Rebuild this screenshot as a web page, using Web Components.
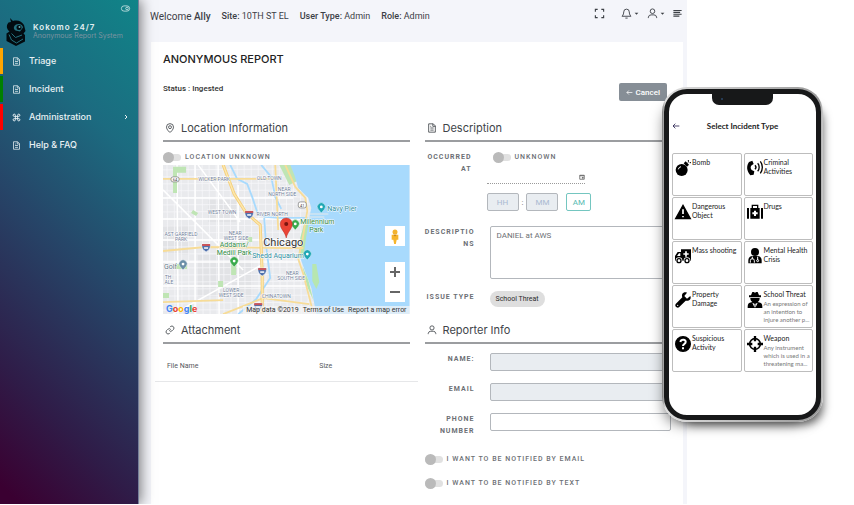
<!DOCTYPE html>
<html lang="en">
<head>
<meta charset="utf-8">
<meta name="viewport" content="width=device-width, initial-scale=1">
<title>Kokomo 24/7 - Anonymous Report</title>
<style>
  body {
    margin: 0;
    background: #fff;
    font-family: Roboto, "Liberation Sans", sans-serif;
    --heading-font: Inter, "Liberation Sans", sans-serif;
    --phone-font: Lato, "Liberation Sans", sans-serif;
  }
</style>
</head>
<body>
<report-page></report-page>

<script>
const ICONS = {
  file: `<path d="M4 2h11l5 5v15H4zM14 2v6h6M8 12h8M8 17h8M8 8h2"/>`,
  command: `<path d="M18 3a3 3 0 0 0-3 3v12a3 3 0 1 0 3-3H6a3 3 0 1 0 3 3V6a3 3 0 1 0-3 3h12a3 3 0 0 0 0-6z" stroke-width="2.500"/>`,
  chevron: `<path d="M8 4l8 8-8 8" stroke-width="4"/>`,
  toggle: `<rect x="1" y="5" width="22" height="14" rx="7"/><circle cx="16" cy="12" r="3.500"/>`,
  pin: `<path d="M20.500 10c0 6-8.500 13-8.500 13S3.500 16 3.500 10a8.500 8.500 0 0 1 17 0z"/><circle cx="12" cy="10" r="3.500"/>`,
  link: `<path d="M10 13a5 5 0 0 0 7.500.500l3-3a5 5 0 0 0-7-7L11.800 5.200M14 11a5 5 0 0 0-7.500-.500l-3 3a5 5 0 0 0 7 7l1.700-1.700"/>`,
  user: `<circle cx="12" cy="7" r="5"/><path d="M3 22v-2a6 6 0 0 1 6-5h6a6 6 0 0 1 6 5v2"/>`,
  bell: `<path d="M18 8.500a6 6 0 0 0-12 0c0 7-4 9.500-4 9.500h20s-4-2.500-4-9.500M9.500 22h5"/>`,
  expand: `<path d="M8 3H3v5M16 3h5v5M8 21H3v-5M16 21h5v-5" stroke-width="2.500"/>`,
  menu: `<path d="M1 4h22M1 9h18M1 14h22M1 19h16" stroke-width="3"/>`,
  caret: `<path d="M3 8h18l-9 10z" fill="currentColor" stroke="none"/>`,
  back: `<path d="M22 12H3M10 5l-7 7 7 7" stroke-width="2.500"/>`,
  calendar: `<path d="M3 5h18v16H3zM3 7h18" stroke-width="3"/><path d="M13 13h4v4h-4z" fill="currentColor"/>`,
  bomb: `<g fill="currentColor" stroke="none"><circle cx="10" cy="15" r="9"/><path d="M13 5l3-3 5 5-3 3z"/></g><path d="M19 4l2-2M20 0v2M22 4h2" stroke-width="1.500"/><path d="M5 14a5 5 0 0 1 4-4" stroke="#fff" stroke-width="1.500"/>`,
  call: `<path d="M8 1L3 3C-1 9-1 16 5 23l5-1 1-5-4-2c-2-2-2-5 0-7l3-2z" fill="currentColor" stroke="none"/><path d="M12 8c2 2 2 4 0 6M16 5c3 3 3 9 0 12M20 2c4 5 4 13 0 18" stroke-width="2"/>`,
  warning: `<path d="M12 2l11 20H1z" fill="currentColor"/><path d="M12 8v7M12 18v2" stroke="#fff" stroke-width="2.500"/>`,
  medkit: `<g fill="currentColor" stroke="none"><path d="M0 6h3v16H0zM21 6h3v16h-3zM5 6h14v16H5z"/></g><path d="M8 6V2h8v4"/><path d="M12 10v8M8 14h8" stroke="#fff" stroke-width="3"/>`,
  ambulance: `<path d="M9 2h15v17H0v-7l4-6h5z" fill="currentColor" stroke="none"/><path d="M16.500 5v8M12.500 9h8" stroke="#fff" stroke-width="2.500"/><path d="M3 12l3-4h2v4z" fill="#fff" stroke="none"/><circle cx="6" cy="19" r="5" fill="#fff" stroke="none"/><circle cx="18" cy="19" r="5" fill="#fff" stroke="none"/><circle cx="6" cy="19" r="3"/><circle cx="18" cy="19" r="3"/>`,
  doctor: `<g fill="currentColor" stroke="none"><circle cx="12" cy="6" r="6"/><path d="M2 23v-4c0-5 3-7 7-7h6c4 0 7 2 7 7v4z"/></g><path d="M8 13v4M5 22v-3a3 3 0 0 1 6 0v3M16 13v5" stroke="#fff" stroke-width="1.500"/><circle cx="16" cy="19" r="1.500" stroke="#fff" stroke-width="1.500"/>`,
  wrench: `<path d="M23 6l-5 4-4-4 4-5C13-1 9 3 11 8L1 18c-2 3 2 7 5 5l10-10c5 1 9-2 7-7z" fill="currentColor" stroke="none"/><circle cx="4" cy="20" r="1" fill="#fff" stroke="none"/>`,
  spy: `<g fill="currentColor" stroke="none"><path d="M8 0h2l2 1 2-1h2l2 5h3v3H3V5h3zM5 9h14c0 3-1 5-3 6l4 1c3 1 3 4 3 8H1c0-4 0-7 3-8l4-1c-2-1-3-3-3-6z"/></g><path d="M8 16l4 2 4-2-3 7h-2z" fill="#fff" stroke="none"/><path d="M12 17v6" stroke-width="1"/>`,
  question: `<circle cx="12" cy="12" r="11" fill="currentColor"/><path d="M8 9c1-5 9-4 8 0 0 3-4 3-4 6M12 17v3" stroke="#fff" stroke-width="3"/>`,
  target: `<circle cx="12" cy="12" r="8" stroke-width="2.500"/><path d="M12 0v8M12 16v8M0 12h8M16 12h8" stroke-width="3.500"/>`
};

const icon = (name, size = 10) =>
  `<svg class="icon" viewBox="0 0 24 24" width="${size}" height="${size}" fill="none" stroke="currentColor" stroke-width="2" aria-hidden="true">${ICONS[name]}</svg>`;

const BASE = `
  * { box-sizing: border-box; }
  svg { display: block; flex: none; overflow: visible; }
  button { border: 0; padding: 0; margin: 0; background: none; color: inherit; font: inherit; cursor: pointer; }
  a { color: inherit; text-decoration: none; }
  input, textarea { margin: 0; font: inherit; color: inherit; outline: none; }
`;

class BaseElement extends HTMLElement {
  constructor() {
    super();
    this.root = this.attachShadow({ mode: "open" });
  }

  connectedCallback() {
    this.root.innerHTML = `<style>${BASE}${this.styles()}</style>${this.render()}`;
  }
}

class NavItem extends BaseElement {
  styles() {
    return `
      :host { display: block; }
      a {
        display: flex;
        align-items: center;
        gap: 8px;
        height: 26px;
        padding: 0 9px;
        border-left: 3px solid var(--mark, transparent);
        color: #e9f1f4;
        font: 500 9px/12px var(--heading-font);
      }
      span { flex: 1; }
    `;
  }

  render() {
    const arrow = this.hasAttribute("expandable") ? icon("chevron", 6) : "";
    return `<a href="#">${icon(this.getAttribute("icon"), 9)}<span><slot></slot></span>${arrow}</a>`;
  }
}

class SideNav extends BaseElement {
  styles() {
    return `
      :host {
        display: block;
        position: relative;
        z-index: 1;
        background: linear-gradient(225deg, #108488 0%, #1c6b80 25%, #264568 50%, #2f1c48 78%, #3a0031 97%);
        border-right: 1px solid #76809a;
        box-shadow: 2px 0 12px rgba(0, 0, 0, .5);
      }
      .pin { display: flex; justify-content: flex-end; padding: 4px 8px 0; color: #d5e9ea; }
      .brand { display: flex; align-items: center; gap: 7px; height: 35px; padding: 2px 6px 0; }
      h1 { margin: 0; color: #e4f0f2; font: 600 8px/9px var(--heading-font); letter-spacing: 1px; }
      p { margin: 0; color: #7c93a0; font: 7px/8px var(--heading-font); }
      nav { display: grid; gap: 2px; }
    `;
  }

  render() {
    return `
      <div class="pin"><button aria-label="Pin menu">${icon("toggle", 9)}</button></div>
      <div class="brand">
        <svg viewBox="0 0 40 56" width="20" height="28" aria-hidden="true">
          <path fill="#020b10" d="M8 0l6 6c10-3 18 1 22 8l3 12-4 5 3 3v13L20 56 1 46V31l6-4C1 22 0 15 5 9l5-1z"/>
          <path fill="#24717f" d="M20 13c7-3 13 0 14 6l-6 8-9-2c-5-3-4-9 1-12z"/>
          <circle cx="26" cy="19" r="5" fill="#020b10"/><circle cx="27" cy="18" r="2" fill="#6caab0"/>
          <path fill="none" stroke="#24717f" stroke-width="2" d="M6 33l5 11 10 6 13-8M11 31l8 8 13-5"/>
        </svg>
        <div><h1>Kokomo 24/7</h1><p>Anonymous Report System</p></div>
      </div>
      <nav>
        <nav-item icon="file" style="--mark: orange">Triage</nav-item>
        <nav-item icon="file" style="--mark: green">Incident</nav-item>
        <nav-item icon="command" style="--mark: red" expandable>Administration</nav-item>
        <nav-item icon="file">Help &amp; FAQ</nav-item>
      </nav>
    `;
  }
}

class TopBar extends BaseElement {
  styles() {
    return `
      :host {
        display: flex;
        justify-content: space-between;
        height: 42px;
        padding: 0 5px 0 11px;
        color: #3c4046;
      }
      .info { display: flex; gap: 11px; padding-top: 10px; font-size: 9px; line-height: 13px; white-space: nowrap; }
      .welcome { font-size: 10px; }
      b { font-weight: 500; }
      .actions { display: flex; align-items: center; gap: 8px; height: 26px; }
      button { display: flex; align-items: center; gap: 2px; }
      .actions button:first-child { margin-right: 8px; }
    `;
  }

  render() {
    return `
      <div class="info">
        <span class="welcome">Welcome <b>Ally</b></span>
        <span><b>Site:</b> 10TH ST EL</span>
        <span><b>User Type:</b> Admin</span>
        <span><b>Role:</b> Admin</span>
      </div>
      <div class="actions">
        <button aria-label="Full screen">${icon("expand", 11)}</button>
        <button aria-label="Notifications">${icon("bell", 11)}${icon("caret", 5)}</button>
        <button aria-label="Account">${icon("user", 11)}${icon("caret", 5)}</button>
        <button aria-label="Menu">${icon("menu", 9)}</button>
      </div>
    `;
  }
}

class SectionHeading extends BaseElement {
  styles() {
    return `
      :host { display: block; border-bottom: 2px solid #9b9da0; color: #404449; }
      h3 {
        display: flex;
        align-items: center;
        gap: 6px;
        margin: 0;
        height: 22px;
        padding: 0 2px 2px;
        font: 400 11px/14px var(--heading-font);
      }
    `;
  }

  render() {
    return `<h3>${icon(this.getAttribute("icon"), 10)}<slot></slot></h3>`;
  }
}

class ToggleSwitch extends BaseElement {
  styles() {
    return `
      :host { display: block; }
      label {
        display: flex;
        align-items: center;
        gap: 4px;
        color: #6c6f75;
        font-size: 7px;
        font-weight: 500;
        line-height: 12px;
        letter-spacing: 1px;
        white-space: nowrap;
      }
      input {
        appearance: none;
        display: flex;
        align-items: center;
        width: 18px;
        height: 7px;
        border-radius: 4px;
        background: #e1e1e1;
      }
      input::before { content: ""; width: 11px; height: 11px; border-radius: 50%; background: #bababa; flex: none; }
      input:checked { justify-content: flex-end; }
    `;
  }

  render() {
    return `<label><input type="checkbox"><span><slot></slot></span></label>`;
  }
}

const LABEL = `
  .row { display: grid; grid-template-columns: 50px minmax(0, 1fr); gap: 15px; align-items: start; }
  .label {
    color: #6c6f75;
    font-size: 7px;
    font-weight: 700;
    line-height: 12px;
    letter-spacing: 1px;
    text-align: right;
    overflow-wrap: anywhere;
  }
`;

class TextField extends BaseElement {
  styles() {
    return `
      :host { display: block; }
      ${LABEL}
      input, textarea {
        display: block;
        width: 100%;
        height: 18px;
        padding: 4px 6px;
        border: 1px solid #b3b7bc;
        border-radius: 2px;
        background: #fff;
        color: #6d7075;
        font-size: 8px;
        line-height: 10px;
      }
      textarea { height: 53px; resize: none; }
      input:disabled { background: #e9edf1; }
    `;
  }

  render() {
    const value = this.getAttribute("value") || "";
    const disabled = this.hasAttribute("disabled") ? "disabled" : "";
    const control = this.hasAttribute("multiline")
      ? `<textarea id="field">${value}</textarea>`
      : `<input id="field" type="text" value="${value}" ${disabled}>`;
    return `<div class="row"><label class="label" for="field">${this.getAttribute("label")}</label>${control}</div>`;
  }
}

class OccurredField extends BaseElement {
  styles() {
    return `
      :host { display: block; }
      ${LABEL}
      .row { grid-template-columns: 47px minmax(0, 1fr); }
      toggle-switch { padding-left: 6px; }
      .date {
        display: flex;
        align-items: center;
        width: 98px;
        height: 13px;
        margin-top: 8px;
        border-bottom: 1px dotted #9a9a9a;
        color: #555;
      }
      .date input { flex: 1; min-width: 0; border: 0; padding: 0; height: 10px; background: none; }
      .time { display: flex; align-items: center; gap: 3px; margin-top: 9px; color: #666; font-size: 8px; }
      .time input, .time button { height: 18px; border: 1px solid #b3b7bc; border-radius: 2px; text-align: center; padding: 0; }
      .time input { width: 32px; background: #e9edf1; }
      .time input::placeholder { color: #a9bad2; opacity: 1; }
      .time button { width: 25px; margin-left: 5px; border-color: #74c6c0; color: #57bab2; }
    `;
  }

  render() {
    return `
      <div class="row">
        <label class="label" for="date">OCCURRED AT</label>
        <div>
          <toggle-switch>UNKNOWN</toggle-switch>
          <div class="date"><input id="date" type="text"><button aria-label="Pick a date">${icon("calendar", 6)}</button></div>
          <div class="time">
            <input type="text" placeholder="HH" aria-label="Hours" disabled><span>:</span>
            <input type="text" placeholder="MM" aria-label="Minutes" disabled>
            <button>AM</button>
          </div>
        </div>
      </div>
    `;
  }
}

class IssueType extends BaseElement {
  styles() {
    return `
      :host { display: block; }
      ${LABEL}
      .label { white-space: nowrap; }
      .chip {
        justify-self: start;
        padding: 2px 6px;
        border-radius: 8px;
        background: #dedede;
        color: #2c2c2c;
        font-size: 7px;
        line-height: 12px;
      }
    `;
  }

  render() {
    return `<div class="row"><span class="label">ISSUE TYPE</span><span class="chip"><slot></slot></span></div>`;
  }
}

class CityMap extends BaseElement {
  styles() {
    return `
      :host { display: grid; height: 149px; overflow: hidden; font-family: Roboto, sans-serif; }
      .map, .controls { grid-area: 1 / 1; }
      .map { width: 100%; height: 149px; }
      .area { font-size: 5px; fill: #6f7d98; text-anchor: middle; }
      .halo text { paint-order: stroke; stroke: #fff; stroke-width: 1px; stroke-linejoin: round; }
      .controls { z-index: 1; display: flex; flex-direction: column; justify-content: flex-end; align-items: flex-end; }
      .controls button {
        display: grid;
        place-items: center;
        width: 20px;
        height: 20px;
        margin-right: 5px;
        background: #fff;
        color: #666;
      }
      .pegman { margin-bottom: 16px; }
      .legal { display: flex; align-self: stretch; justify-content: space-between; align-items: flex-end; margin-top: 1px; }
      .logo { padding-left: 3px; font: 700 9px/11px var(--heading-font); }
      .links { display: flex; gap: 4px; padding: 0 3px; background: rgba(245, 245, 245, .7); color: #333; font-size: 7px; line-height: 8px; white-space: nowrap; }
    `;
  }

  // Evenly spaced minor streets
  streets() {
    let d = "";
    for (let x = 4; x < 150; x += 7) d += `M${x} 0l1 149`;
    for (let y = 5; y < 149; y += 7) d += `M0 ${y}l155-1`;
    return d;
  }

  shield(x, y) {
    return `<g transform="translate(${x} ${y})"><path d="M-4-3h8c1 4-1 6-4 8-3-2-5-4-4-8z" fill="#4f71ad" stroke="#fff" stroke-width=".6"/><path d="M-4-3h8v2h-8z" fill="#c9545a"/><path d="M-2 1h4" stroke="#fff" stroke-width="1.500"/></g>`;
  }

  poi(x, y, color) {
    return `<path transform="translate(${x} ${y})" d="M0 5L-3 1.500a4 4 0 1 1 6 0z" fill="${color}" stroke="#fff" stroke-width=".4"/><circle cx="${x}" cy="${y - 1}" r="1.400" fill="#fff"/>`;
  }

  render() {
    return `
      <svg class="map" viewBox="0 0 246 149" preserveAspectRatio="xMidYMid slice" role="img" aria-label="Map of Chicago">
        <path fill="#e9eaed" d="M0 0h246v149H0z"/>
        <path fill="#e2e3e6" d="M45 35h28v22H45zM35 90h55v42H35zM0 60h26v30H0z"/>
        <path stroke="#f8f8fa" stroke-width=".7" fill="none" d="${this.streets()}"/>
        <path stroke="#fff" stroke-width="1.500" fill="none" d="M14 0l1 149M32 0v149M55 0l1 149M75 20v129M0 33h130M0 54h140M0 75h138M0 97h135M0 121h145M35 0l42 57M0 25l80 80M10 149l90-50"/>
        <path fill="#bfe5b4" d="M10 2h13v6H14v20H10zM30 45l5 3-2 3-5-3zM10 99h14v5H10zM68 97h5v13h-5zM55 116h5v6h-5zM116 0h12l6 16-8 4zM0 128h6v5H0zM84 72h5v5h-5z"/>
        <path fill="#a8dafd" d="M127 0l4 10 4 13 10 10 3 10-3 14-3 10-2 13-3 13 5 14 6 16 5 26h93V0z"/>
        <path fill="#b7e6b0" d="M142 54h4l-3 17-3 22h-5l2-20zM149 99h4l3 18-3 7-4-8zM139 101l6 14 5 20-6-13z"/>
        <path fill="none" stroke="#a8dafd" stroke-width="1.800" d="M67 0l7 14 10 5 5 13 5 15 8 5 14 1 29 0M101 53l2 29 4 31-14 21-18 15M98 0l10 12 4 20 6 12"/>
        <path stroke="#e5e9eb" stroke-width="1" d="M145 49h20M143 52h18"/>
        <g fill="none" stroke-linejoin="round">
          <path stroke="#f7dc97" stroke-width="1.800" d="M0 14h111M112 0l3 65M0 86l42-4 80 1h18M60 149l40-16 46 6M122 0l10 22 10 11 2 13-5 30-4 18 5 15 9 35M0 137l60-2"/>
          <path stroke="#f5cd72" stroke-width="3" d="M60 0l11 29 12 19 14 12 2 48v41"/>
          <path stroke="#fce7ae" stroke-width="1.500" d="M60 0l11 29 12 19 14 12 2 48v41"/>
        </g>
        ${this.shield(86, 49)}${this.shield(43, 82)}${this.shield(99, 106)}${this.shield(95, 141)}
        <g fill="#fff" stroke="#777" stroke-width=".7"><rect x="8" y="12" width="8" height="5" rx="2"/><rect x="135" y="37" width="8" height="6" rx="2"/></g>
        <g font-size="4" fill="#444" text-anchor="middle"><text x="12" y="16">64</text><text x="139" y="42">41</text></g>
        ${this.poi(20, 100, "#6b8fa8")}${this.poi(71, 97, "#3aaa4c")}${this.poi(158, 43, "#1fa7b5")}${this.poi(132, 60, "#3aaa4c")}${this.poi(144, 90, "#1fa7b5")}
        <g class="halo">
          <g class="area">
            <text x="51" y="16">WICKER PARK</text><text x="106" y="15">OLD TOWN</text>
            <text x="121" y="26">NEAR</text><text x="119" y="31">NORTH SIDE</text>
            <text x="59" y="49">WEST TOWN</text><text x="109" y="51">RIVER NORTH</text>
            <text x="18" y="71">AST GARFIELD</text><text x="18" y="76">PARK</text>
            <text x="72" y="70">NEAR</text><text x="73" y="75">WEST SIDE</text>
            <text x="129" y="110">NEAR</text><text x="128" y="115">SOUTH SIDE</text>
            <text x="68" y="127">LOWER</text><text x="68" y="132">WEST SIDE</text><text x="113" y="133">CHINATOWN</text>
            <text x="5" y="114">TH</text><text x="6" y="119">ALE</text>
          </g>
          <g font-size="7" fill="#2f8a43" text-anchor="middle">
            <text x="71" y="82">Addams/</text><text x="71" y="90">Medill Park</text>
            <text x="154" y="59">Millennium</text><text x="153" y="67">Park</text>
          </g>
          <g font-size="7"><text x="89" y="93" fill="#2b8ba0">Shedd Aquarium</text><text x="164" y="46" fill="#2b8ba0">Navy Pier</text><text x="1" y="104" fill="#5d7486">Golf</text></g>
          <text x="100" y="81" font-size="11" fill="#333">Chicago</text>
        </g>
        <path fill="#ea4335" stroke="#b92b20" stroke-width=".5" d="M123 73c-1-6-6-9-6-14a6 6 0 0 1 12 0c0 5-5 8-6 14z"/>
        <circle cx="123" cy="59" r="2" fill="#7d1510"/>
      </svg>
      <div class="controls">
        <button class="pegman" aria-label="Street view">
          <svg viewBox="0 0 12 18" width="10" height="15"><circle cx="6" cy="3.500" r="3" fill="#f3b32e"/><path d="M2 7h8v6H8l-1 5H5l-1-5H2z" fill="#f6b52b"/><path d="M4 7l2 2 2-2" fill="#c77f16"/></svg>
        </button>
        <button aria-label="Zoom in"><svg viewBox="0 0 10 10" width="10" height="10" stroke="currentColor" stroke-width="2"><path d="M0 5h10M5 0v10"/></svg></button>
        <button aria-label="Zoom out"><svg viewBox="0 0 10 10" width="10" height="10" stroke="currentColor" stroke-width="2"><path d="M0 5h10"/></svg></button>
        <div class="legal">
          <span class="logo"><span style="color:#4285f4">G</span><span style="color:#ea4335">o</span><span style="color:#fbbc05">o</span><span style="color:#4285f4">g</span><span style="color:#34a853">l</span><span style="color:#ea4335">e</span></span>
          <div class="links"><span>Map data ©2019</span><a href="#">Terms of Use</a><a href="#">Report a map error</a></div>
        </div>
      </div>
    `;
  }
}

class FileTable extends BaseElement {
  styles() {
    return `
      :host { display: block; margin: 0 -8px; }
      table { width: 100%; border-collapse: collapse; table-layout: fixed; }
      th {
        height: 37px;
        padding: 8px 12px 0;
        border-bottom: 1px solid #e6e7e9;
        color: #55585d;
        font-size: 7px;
        font-weight: 400;
        text-align: left;
      }
      th:first-child { width: 58%; }
    `;
  }

  render() {
    return `<table><thead><tr><th>File Name</th><th>Size</th></tr></thead><tbody></tbody></table>`;
  }
}

class IncidentCard extends BaseElement {
  styles() {
    return `
      :host { display: block; min-height: 43px; border: 1px solid #bdbdbd; border-radius: 2px; background: #fff; }
      button { display: flex; align-items: flex-start; gap: 1px; width: 100%; height: 100%; padding: 4px 0 0 2px; color: #000; text-align: left; }
      svg { margin-top: 2px; }
      .name { display: block; color: #222; font: 7px/9px var(--phone-font); }
      .note { display: block; margin-top: 1px; color: #777; font: 6px/8px var(--phone-font); }
    `;
  }

  render() {
    const note = this.getAttribute("note");
    return `
      <button>
        ${icon(this.getAttribute("icon"), 16)}
        <span><span class="name"><slot></slot></span>${note ? `<span class="note">${note}</span>` : ""}</span>
      </button>
    `;
  }
}

class PhoneMockup extends BaseElement {
  styles() {
    return `
      :host {
        display: block;
        width: 161px;
        height: 335px;
        padding: 2px;
        border-radius: 25px;
        background: linear-gradient(90deg, #777, #ddd 2%, #999 98%, #ccc);
        box-shadow: -6px 10px 14px -8px rgba(0, 0, 0, .5), 8px 10px 10px -8px rgba(0, 0, 0, .6);
      }
      .screen {
        display: flex;
        flex-direction: column;
        align-items: stretch;
        height: 100%;
        padding: 0 3px;
        border: 5px solid #171819;
        border-radius: 23px;
        background: #fff;
      }
      .notch {
        align-self: center;
        width: 61px;
        height: 11px;
        border-radius: 0 0 7px 7px;
        background: #171819;
      }
      .notch::before { content: ""; display: block; width: 2px; height: 2px; margin: 4px 0 0 9px; border-radius: 50%; background: #2b4668; }
      header { display: grid; grid-template-columns: 8px 1fr 8px; align-items: center; height: 12px; margin: 15px 0 21px; color: #2a2350; }
      h2 { margin: 0; color: #222; font: 700 8px/12px var(--phone-font); text-align: center; }
      .grid { display: grid; grid-template-columns: 1fr 1fr; gap: 1px 2px; }
    `;
  }

  render() {
    return `
      <div class="screen">
        <div class="notch"></div>
        <header><button aria-label="Back">${icon("back", 8)}</button><h2>Select Incident Type</h2></header>
        <div class="grid">
          <incident-card icon="bomb">Bomb</incident-card>
          <incident-card icon="call">Criminal Activities</incident-card>
          <incident-card icon="warning">Dangerous Object</incident-card>
          <incident-card icon="medkit">Drugs</incident-card>
          <incident-card icon="ambulance">Mass shooting</incident-card>
          <incident-card icon="doctor">Mental Health Crisis</incident-card>
          <incident-card icon="wrench">Property Damage</incident-card>
          <incident-card icon="spy" note="An expression of an intention to injure another p...">School Threat</incident-card>
          <incident-card icon="question">Suspicious Activity</incident-card>
          <incident-card icon="target" note="Any instrument which is used in a threatening ma...">Weapon</incident-card>
        </div>
      </div>
    `;
  }
}

class ReportPage extends BaseElement {
  styles() {
    return `
      :host { display: block; position: relative; }
      .app {
        display: grid;
        grid-template-columns: 139px minmax(0, 1fr);
        min-height: calc(100vh - 1px);
        margin-right: 167px;
        background: #f4f5fa;
      }
      main { display: flex; flex-direction: column; }
      .card { flex: 1; margin: 0 4px 0 12px; padding: 9px 12px; background: #fff; }
      h2 { margin: 0; color: #222; font: 500 11px/16px var(--heading-font); }
      .status { display: flex; justify-content: space-between; align-items: flex-start; margin: 16px 0 17px; }
      .status span { color: #333; font-size: 8px; font-weight: 500; line-height: 11px; }
      .cancel {
        display: flex;
        align-items: center;
        gap: 3px;
        height: 18px;
        margin-right: 4px;
        padding: 0 7px;
        border-radius: 2px;
        background: #868e96;
        color: #fff;
        font-size: 8px;
        font-weight: 500;
      }
      .columns { display: grid; grid-template-columns: minmax(0, 1fr) minmax(0, 1fr); gap: 15px; }
      .location { margin: 9px 0 2px; }
      .attachment { margin-top: 6px; }
      .fields { display: grid; padding-top: 9px; }
      .details { gap: 15px; }
      .details issue-type { margin-top: -3px; }
      .reporter { gap: 12px; }
      .notify { display: grid; gap: 12px; margin-top: 16px; }
      section + section { margin-top: 13px; }
      phone-mockup { position: absolute; top: 87px; right: 31px; z-index: 2; }
    `;
  }

  render() {
    return `
      <div class="app">
        <side-nav></side-nav>
        <main>
          <top-bar></top-bar>
          <div class="card">
            <h2>ANONYMOUS REPORT</h2>
            <div class="status"><span>Status : Ingested</span><button class="cancel">${icon("back", 7)}Cancel</button></div>
            <div class="columns">
              <div>
                <section-heading icon="pin">Location Information</section-heading>
                <toggle-switch class="location">LOCATION UNKNOWN</toggle-switch>
                <city-map></city-map>
                <section-heading class="attachment" icon="link">Attachment</section-heading>
                <file-table></file-table>
              </div>
              <div>
                <section>
                  <section-heading icon="file">Description</section-heading>
                  <div class="fields details">
                    <occurred-field></occurred-field>
                    <text-field label="DESCRIPTIONS" value="DANIEL at AWS" multiline></text-field>
                    <issue-type>School Threat</issue-type>
                  </div>
                </section>
                <section>
                  <section-heading icon="user">Reporter Info</section-heading>
                  <div class="fields reporter">
                    <text-field label="NAME:" disabled></text-field>
                    <text-field label="EMAIL" disabled></text-field>
                    <text-field label="PHONE NUMBER"></text-field>
                  </div>
                  <div class="notify">
                    <toggle-switch>I WANT TO BE NOTIFIED BY EMAIL</toggle-switch>
                    <toggle-switch>I WANT TO BE NOTIFIED BY TEXT</toggle-switch>
                  </div>
                </section>
              </div>
            </div>
          </div>
        </main>
      </div>
      <phone-mockup></phone-mockup>
    `;
  }
}

customElements.define("nav-item", NavItem);
customElements.define("side-nav", SideNav);
customElements.define("top-bar", TopBar);
customElements.define("section-heading", SectionHeading);
customElements.define("toggle-switch", ToggleSwitch);
customElements.define("text-field", TextField);
customElements.define("occurred-field", OccurredField);
customElements.define("issue-type", IssueType);
customElements.define("city-map", CityMap);
customElements.define("file-table", FileTable);
customElements.define("incident-card", IncidentCard);
customElements.define("phone-mockup", PhoneMockup);
customElements.define("report-page", ReportPage);
</script>
</body>
</html>
